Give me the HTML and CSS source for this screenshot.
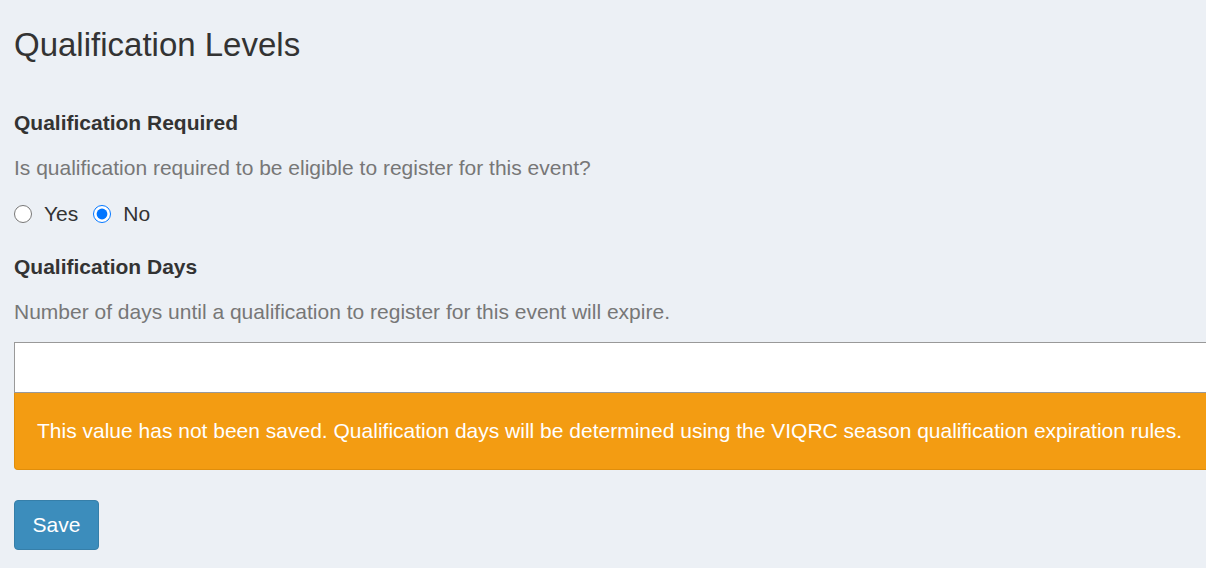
FILE: index.html
```html
<!DOCTYPE html>
<html>
<head>
<meta charset="utf-8">
<link rel="stylesheet" href="styles.css">
</head>
<body>
<div class="page">
  <h1 class="title">Qualification Levels</h1>
  <div class="group">
    <div class="label">Qualification Required</div>
    <p class="help">Is qualification required to be eligible to register for this event?</p>
    <div class="radios">
      <label class="radio"><input type="radio" name="req"> Yes</label>
      <label class="radio"><input type="radio" name="req" checked> No</label>
    </div>
  </div>
  <div class="group">
    <div class="label">Qualification Days</div>
    <p class="help">Number of days until a qualification to register for this event will expire.</p>
    <input class="field" type="text">
    <div class="alert">This value has not been saved. Qualification days will be determined using the VIQRC season qualification expiration rules.</div>
  </div>
  <button class="btn">Save</button>
</div>
</body>
</html>
```
FILE: styles.css
```css
html, body {
  margin: 0;
  padding: 0;
  background: #ecf0f5;
  overflow: hidden;
}
body {
  font-family: "Liberation Sans", Arial, sans-serif;
  color: #333;
}
.page {
  width: 1220px;
  padding: 0 0 0 14px;
}
.title {
  margin: 0;
  padding-top: 25px;
  font-size: 33px;
  font-weight: normal;
  line-height: 40px;
  color: #333;
}
.group {
  display: flex;
  flex-direction: column;
}
.label {
  font-weight: bold;
  font-size: 21px;
  line-height: 24px;
  margin-top: 46px;
}
.group + .group .label {
  margin-top: 29px;
}
.help {
  margin: 0;
  margin-top: 21px;
  font-size: 21px;
  line-height: 24px;
  color: #777;
}
.radios {
  display: flex;
  gap: 15px;
  margin-top: 22px;
}
.radio {
  display: flex;
  align-items: center;
  gap: 12px;
  font-size: 21px;
  line-height: 24px;
}
.radio input {
  margin: 0;
  width: 18px;
  height: 18px;
}
.field {
  margin-top: 18px;
  box-sizing: border-box;
  height: 51px;
  width: 100%;
  border: 1px solid #999;
  background: #fff;
  padding: 0 12px;
  font-size: 18px;
  outline: none;
}
.alert {
  box-sizing: border-box;
  width: 100%;
  background: #f39c12;
  border: 1px solid #e08e0b;
  border-top: none;
  border-radius: 0 0 4px 4px;
  color: #fff;
  font-size: 21px;
  line-height: 24px;
  padding: 26px 22px 26px 22px;
}
.btn {
  margin-top: 30px;
  background: #3c8dbc;
  border: 1px solid #367fa9;
  border-radius: 4px;
  color: #fff;
  font-family: "Liberation Sans", Arial, sans-serif;
  font-size: 21px;
  width: 85px;
  height: 50px;
  padding: 0;
}
```
